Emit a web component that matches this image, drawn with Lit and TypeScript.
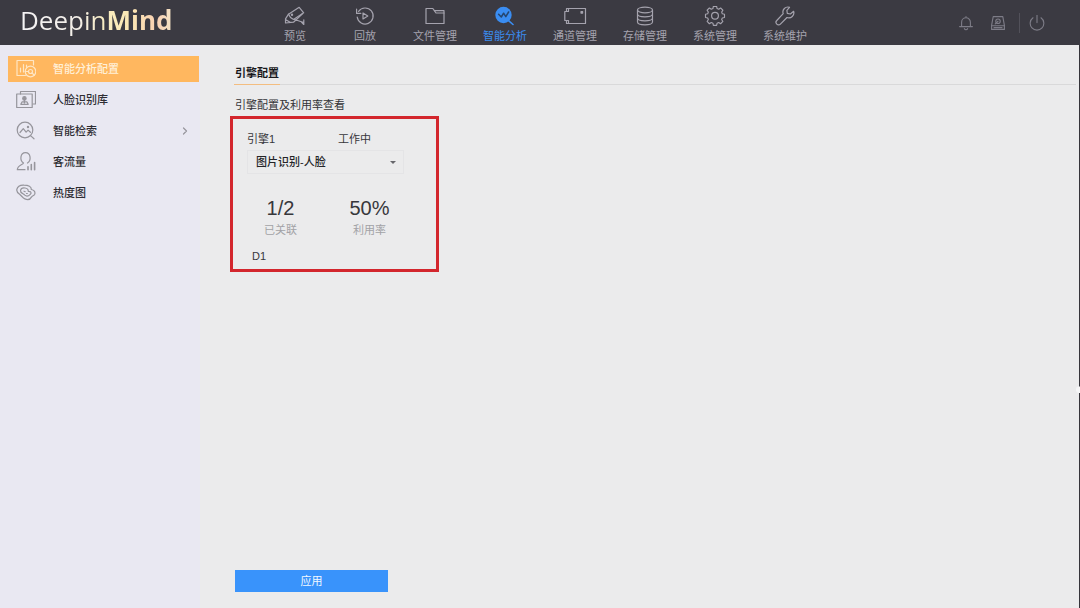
import { LitElement, html, svg, css, nothing, type TemplateResult, type SVGTemplateResult } from "lit";
import { customElement, property, state } from "lit/decorators.js";
import { classMap } from "lit/directives/class-map.js";

const glyphs: Record<string, SVGTemplateResult> = {
  preview: svg`<path d="M3.500 8.200 14.200 1.300 18.700 6.800 8.500 13.500Q5 12 3.500 8.200Z"/><circle cx="7" cy="8.800" r=".6"/><path d="M3.500 8.200.5 12.800V17l8-.800 8.700-8.200M.5 13.500 5 16.300M9.500 13.500l8.500 2.800M18.800 13.800v4.700l-2.600-2.600"/>`,
  playback: svg`<path d="M3.600 5.400A8 8 0 1 1 2.200 11"/><path d="M1.600 3.200v4.200h4.200"/><path d="M8 7v6l4.800-3Z"/>`,
  folder: svg`<path d="M1 17.500V2.500h6.800l1.600 2.200H19v12.800Z"/><path d="M9.400 4.700 11 7h8"/>`,
  analysis: svg`<circle cx="8.500" cy="9" r="8.200" fill="currentColor" stroke="none"/><path d="M13.800 14.800 18 18.500" stroke-width="1.600"/><path d="M3.600 8.200 6.300 11l2.300-3.800 2.200 3.400L13.600 6" stroke="#26466f" stroke-width="1.500"/>`,
  channel: svg`<path d="M2.500 5.500V2.500h19v15h-19v-3"/><path d="M4.500 2.500v3H.8v9h3.700v3"/><rect x="17" y="5.500" width="1.600" height="1.600" fill="currentColor"/>`,
  storage: svg`<ellipse cx="10" cy="4" rx="7.500" ry="2.800"/><path d="M2.500 4v12c0 3.700 15 3.700 15 0V4M2.500 8c0 3.700 15 3.700 15 0M2.500 12c0 3.700 15 3.700 15 0"/>`,
  system: svg`<path d="M8.300 1h3.400l.5 2.300 1.700.7 2-1.300 2.400 2.400-1.300 2 .7 1.700 2.300.5v3.400l-2.300.5-.7 1.700 1.300 2-2.400 2.400-2-1.300-1.700.7-.5 2.300H8.300l-.5-2.300-1.700-.7-2 1.300-2.400-2.400 1.300-2-.7-1.700L0 12.700V9.300l2.300-.5.7-1.700-1.300-2L4.100 2.700l2 1.300 1.700-.7Z" transform="translate(.5 -.6) scale(.95)"/><circle cx="10" cy="9.800" r="3.400"/>`,
  wrench: svg`<path d="M14.500 1.300a5 5 0 0 0-6.300 6.400L1.800 14.500a2.500 2.500 0 0 0 3.600 3.600L12 11.500a5 5 0 0 0 6.600-6.200L15.400 8 12.300 7.400 11.900 4.300Z"/>`,
  bell: svg`<path d="M2 14.500h16M4.500 14.500V9a5.500 5.500 0 0 1 11 0v5.500M10 3.500V2"/><path d="M8 17a2.100 2.100 0 0 0 4 0"/>`,
  device: svg`<path d="M4 2h12L18 13v5H2v-5Z"/><path d="M2 13.500h16M5 15.800h10"/><circle cx="10" cy="7.800" r="2.800"/><path d="M10 7.800 6.500 11"/>`,
  power: svg`<path d="M5 3.500a8.500 8.500 0 1 0 10 0M10 0v9.500"/>`,
  config: svg`<path d="M9.500 16.500H1V1.500h16.500V6M4.500 13V9M7.500 13V5.500M10.500 8V6"/><circle cx="14.500" cy="12.500" r="5.300"/><circle cx="14.500" cy="12.500" r="2"/><path d="M9.200 12.500h3.300M16 14l2.400 2.200"/>`,
  library: svg`<path d="M4.500 4V1.500h15v12.500H17"/><rect x=".7" y="4" width="15.500" height="13.500"/><circle cx="8.400" cy="8.400" r="1.700" fill="currentColor"/><path d="M8.400 10v3M4.800 14.300h7.400l-1.200-2.400H6Z"/>`,
  search: svg`<circle cx="9" cy="9" r="7.800"/><path d="M14.500 14.600l3.500 3.200M4 11.500 7.300 7.600l2.800 3.600 2-2.100 2.300 2.200"/><circle cx="12" cy="6" r=".6"/>`,
  flow: svg`<path d="M11.500 11c4-2.400 3.400-10.300-2-10.300s-6 7.900-2 10.300C6.500 13 1.500 13 1.300 17.700H9"/><path d="M12 17.700v-3M15.300 17.700v-5.200M18.600 17.700V10.500" stroke-width="1.600"/>`,
  heat: svg`<path d="M.8 6.500C1.500 3.500 4.500 2 8 2.200c4.500 0 7.500 1.300 7.300 4.300 2.800.5 4.200 2.500 3.400 4.700-.7 1.600-2.300 1.500-3.100 2.700-1.200 2.300-4 3.200-6.700 2-2-.9-3.300-3-5-4.400C2 10.200.3 9 .8 6.500Z"/><path d="M4.500 7.500C5 5 7 4.700 9 5c2.300.3 3.300 1.500 3.300 3.300 2.700-.2 3.500 1.800 2 3-1.600 1.600-3.800 2.300-5.500.8C7.500 10.600 4 10 4.500 7.500Z"/><path d="M8 8.200l1.200.5M10.500 10.500h.8"/>`,
};

const icon = (name: string, wide = false): TemplateResult => html`<svg
  class="icon"
  viewBox=${wide ? "0 0 22 20" : "0 0 20 20"}
  aria-hidden="true"
>${glyphs[name]}</svg>`;

const iconStyles = css`
  .icon {
    display: block;
    flex: none;
    width: 20px;
    height: 20px;
    fill: none;
    stroke: currentColor;
    stroke-width: 1.2;
    stroke-linejoin: round;
    stroke-linecap: round;
  }
  a {
    color: inherit;
    text-decoration: none;
  }
`;

@customElement("top-bar")
export class TopBar extends LitElement {
  static styles = [
    iconStyles,
    css`
      :host {
        display: flex;
        align-items: stretch;
        height: 45px;
        box-sizing: border-box;
        background: #3b3a42;
        color: #a5a3ae;
      }
      .logo {
        flex: none;
        box-sizing: border-box;
        width: 260px;
        padding: 0 0 5px 20px;
        align-self: center;
        font: 400 26px/32px "Open Sans", sans-serif;
      }
      .brand {
        background: linear-gradient(90deg, #f4f3f5 0%, #f3eee8 38%, #f8ecc0 56%, #fbe7b4 72%, #f8d0b2 90%, #f4e3c6 100%);
        background-clip: text;
        -webkit-background-clip: text;
        color: transparent;
      }
      .brand b {
        font-weight: 700;
      }
      .nav {
        display: flex;
      }
      .tab {
        width: 70px;
        padding-top: 6px;
        display: flex;
        flex-direction: column;
        align-items: center;
        gap: 3px;
        font-size: 11px;
        line-height: 14px;
      }
      .tab.active {
        color: #3a8df2;
      }
      .tab .icon {
        width: 24px;
      }
      .tools {
        margin-left: auto;
        margin-right: 27px;
        display: flex;
        align-items: center;
        color: #7d7c87;
      }
      .tool {
        appearance: none;
        border: 0;
        background: none;
        color: inherit;
        padding: 0 8px;
      }
      .tool .icon {
        width: 16px;
        height: 16px;
        stroke-width: 1.4;
      }
      .divider {
        width: 1px;
        height: 20px;
        margin: 0 1px 0 5px;
        background: #52515a;
      }
    `,
  ];

  private tabs: [string, string][] = [
    ["preview", "预览"],
    ["playback", "回放"],
    ["folder", "文件管理"],
    ["analysis", "智能分析"],
    ["channel", "通道管理"],
    ["storage", "存储管理"],
    ["system", "系统管理"],
    ["wrench", "系统维护"],
  ];

  @state() private current = "analysis";

  render() {
    return html`
      <div class="logo"><span class="brand">Deepin<b>Mind</b></span></div>
      <nav class="nav">
        ${this.tabs.map(
          ([id, label]) => html`<a
            href="#${id}"
            class=${classMap({ tab: true, active: id === this.current })}
            @click=${() => (this.current = id)}
            >${icon(id, id === "channel")}<span>${label}</span></a
          >`
        )}
      </nav>
      <div class="tools">
        <button class="tool" aria-label="通知">${icon("bell")}</button>
        <button class="tool" aria-label="设备">${icon("device")}</button>
        <span class="divider"></span>
        <button class="tool" aria-label="电源">${icon("power")}</button>
      </div>
    `;
  }
}

@customElement("side-menu")
export class SideMenu extends LitElement {
  static styles = [
    iconStyles,
    css`
      :host {
        display: block;
        box-sizing: border-box;
        padding: 11px 1px 0 8px;
        background: #e9e8f2;
        color: #2e2d33;
      }
      .menu {
        display: flex;
        flex-direction: column;
        gap: 5px;
      }
      .item {
        display: flex;
        align-items: center;
        height: 26px;
        padding: 0 10px 0 8px;
        gap: 17px;
        font-size: 11px;
        font-weight: 500;
      }
      .item .icon {
        color: #96959c;
      }
      .item.active {
        background: #ffb75f;
        color: #fff0d8;
      }
      .item.active .icon {
        color: #ffe6c4;
      }
      .item .chevron {
        margin-left: auto;
        width: 8px;
        height: 8px;
      }
    `,
  ];

  private items = [
    { id: "config", label: "智能分析配置", nested: false },
    { id: "library", label: "人脸识别库", nested: false },
    { id: "search", label: "智能检索", nested: true },
    { id: "flow", label: "客流量", nested: false },
    { id: "heat", label: "热度图", nested: false },
  ];

  @state() private current = "config";

  render() {
    return html`<nav class="menu">
      ${this.items.map(
        ({ id, label, nested }) => html`<a
          href="#${id}"
          class=${classMap({ item: true, active: id === this.current })}
          @click=${() => (this.current = id)}
          >${icon(id)}<span>${label}</span>${nested
            ? html`<svg class="icon chevron" viewBox="0 0 8 8" aria-hidden="true"><path d="M2.500 1 5.500 4 2.500 7" /></svg>`
            : nothing}</a
        >`
      )}
    </nav>`;
  }
}

@customElement("engine-card")
export class EngineCard extends LitElement {
  static styles = css`
    :host {
      display: block;
      box-sizing: border-box;
      width: 209px;
      padding: 12px 14px 5px;
      border: 3px solid #d3262d;
      color: #37373b;
      font-size: 11px;
      line-height: 16px;
    }
    .heading {
      display: grid;
      grid-template-columns: 91px 1fr;
    }
    .picker {
      position: relative;
      display: block;
      width: 157px;
      margin-top: 3px;
    }
    .select {
      appearance: none;
      display: block;
      width: 100%;
      height: 24px;
      padding: 0 20px 0 8px;
      border: 1px solid #e4e4e6;
      border-radius: 0;
      background: #ebebec;
      color: #242427;
      font: inherit;
      font-weight: 500;
    }
    .picker::after {
      content: "";
      position: absolute;
      right: 8px;
      top: 11px;
      border: 3px solid transparent;
      border-top-color: #66666b;
      border-bottom: 0;
      pointer-events: none;
    }
    .stats {
      display: grid;
      grid-template-columns: 67px 67px;
      column-gap: 22px;
      margin: 20px 0 0;
      text-align: center;
    }
    .stat {
      display: flex;
      flex-direction: column-reverse;
    }
    .value {
      margin: 0;
      font-size: 20px;
      line-height: 28px;
    }
    .label {
      color: #a2a2a6;
    }
    .channel {
      margin: 10px 0 0 5px;
    }
  `;

  @property() name = "";
  @property() status = "";
  @property() linked = "";
  @property() usage = "";
  @property() channel = "";

  render() {
    return html`
      <div class="heading">
        <label for="mode">${this.name}</label>
        <span>${this.status}</span>
      </div>
      <span class="picker">
        <select class="select" id="mode">
          <option>图片识别-人脸</option>
        </select>
      </span>
      <dl class="stats">
        <div class="stat"><dt class="label">已关联</dt><dd class="value">${this.linked}</dd></div>
        <div class="stat"><dt class="label">利用率</dt><dd class="value">${this.usage}</dd></div>
      </dl>
      <div class="channel">${this.channel}</div>
    `;
  }
}

@customElement("app-root")
export class AppRoot extends LitElement {
  static styles = [
    iconStyles,
    css`
      :host {
        display: flex;
        flex-direction: column;
        min-height: 100vh;
        background: #ebebec;
        color: #333337;
        font-family: "Liberation Sans", "Noto Sans CJK SC", sans-serif;
        font-size: 11px;
        line-height: 16px;
      }
      .body {
        flex: 1;
        display: grid;
        grid-template-columns: 200px 1fr;
        position: relative;
        border-right: 1px solid #35343a;
      }
      .handle {
        position: absolute;
        right: -4px;
        top: calc(61% - 2px);
        width: 7px;
        height: 7px;
        border-radius: 50%;
        background: #f6f6f7;
        clip-path: inset(0 3px 0 0);
      }
      .main {
        display: flex;
        flex-direction: column;
        align-items: flex-start;
        padding: 20px 3px 16px 30px;
      }
      .tabs {
        align-self: stretch;
        display: flex;
        margin-left: 4px;
        border-bottom: 1px solid #d9d9da;
      }
      .tab {
        padding: 0 1px 3px;
        margin-bottom: -1px;
        border-bottom: 1px solid #f3bd80;
        color: #18181b;
        font-weight: 700;
      }
      .title {
        margin: 12px 0 3px 5px;
        font-size: 11px;
        font-weight: 400;
      }
      .apply {
        margin: auto 0 0 5px;
        width: 153px;
        height: 22px;
        padding: 0;
        border: 0;
        background: #3993fb;
        color: #f2f8ff;
        font: inherit;
      }
    `,
  ];

  render() {
    return html`
      <top-bar></top-bar>
      <div class="body">
        <side-menu></side-menu>
        <main class="main">
          <div class="tabs"><a class="tab" href="#engine">引擎配置</a></div>
          <h2 class="title">引擎配置及利用率查看</h2>
          <engine-card name="引擎1" status="工作中" linked="1/2" usage="50%" channel="D1"></engine-card>
          <button class="apply">应用</button>
        </main>
        <span class="handle"></span>
      </div>
    `;
  }
}
